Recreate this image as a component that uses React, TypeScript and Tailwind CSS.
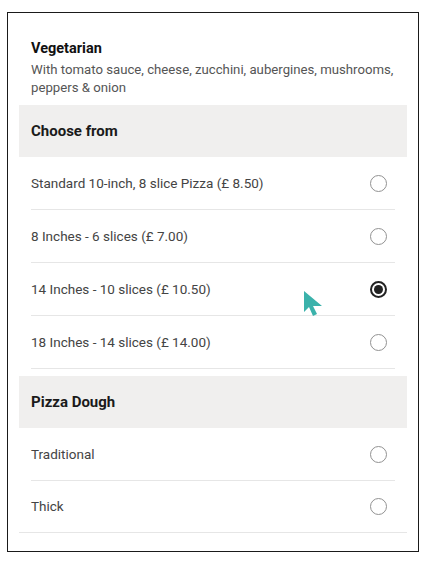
import { useState } from "react";

type Option = { label: string };

const sizes: Option[] = [
  { label: "Standard 10-inch, 8 slice Pizza (£ 8.50)" },
  { label: "8 Inches - 6 slices (£ 7.00)" },
  { label: "14 Inches - 10 slices (£ 10.50)" },
  { label: "18 Inches - 14 slices (£ 14.00)" },
];

const doughs: Option[] = [{ label: "Traditional" }, { label: "Thick" }];

function Radio({ checked }: { checked: boolean }) {
  if (checked) {
    return (
      <span className="flex h-[17px] w-[17px] shrink-0 items-center justify-center rounded-full border-[2px] border-[#222]">
        <span className="block h-[9px] w-[9px] rounded-full bg-[#222]" />
      </span>
    );
  }
  return <span className="block h-[17px] w-[17px] shrink-0 rounded-full border-[1.5px] border-[#929292]" />;
}

function Row({ label, checked, onClick, full }: { label: string; checked: boolean; onClick: () => void; full?: boolean }) {
  return (
    <div className={full ? "border-b border-[#e6e6e6] px-3" : "px-3"}>
      <button
        type="button"
        onClick={onClick}
        className={`flex w-full items-center justify-between pr-[8px] text-left ${full ? "h-[51px]" : "h-[53px] border-b border-[#e6e6e6]"}`}
      >
        <span className="text-[13.5px] text-[#444]">{label}</span>
        <Radio checked={checked} />
      </button>
    </div>
  );
}

function SectionHeader({ title }: { title: string }) {
  return (
    <div className="flex h-[52px] items-center bg-[#f0efee] px-3">
      <h3 className="text-[15px] font-bold text-[#1a1a1a]">{title}</h3>
    </div>
  );
}

export default function App() {
  const [size, setSize] = useState(2);
  const [dough, setDough] = useState<number | null>(null);

  return (
    <div className="h-[567px] w-[429px] bg-white pl-[7px] pt-[12px] font-['Roboto',sans-serif]">
      <div className="relative h-[540px] w-[412px] border border-[#1a1a1a] px-[11px] pt-[26px]">
        <div className="px-3 pb-2">
          <h2 className="text-[14.5px] font-bold leading-5 text-[#111]">Vegetarian</h2>
          <p className="mt-[2px] text-[13.2px] leading-[18px] text-[#555]">
            With tomato sauce, cheese, zucchini, aubergines, mushrooms, peppers &amp; onion
          </p>
        </div>

        <SectionHeader title="Choose from" />
        <div>
          {sizes.map((s, i) => (
            <Row key={s.label} label={s.label} checked={size === i} onClick={() => setSize(i)} />
          ))}
        </div>

        <div className="mt-[7px]">
          <SectionHeader title="Pizza Dough" />
          {doughs.map((d, i) => (
            <Row
              key={d.label}
              label={d.label}
              checked={dough === i}
              onClick={() => setDough(i)}
              full={i === doughs.length - 1}
            />
          ))}
        </div>

        {/* mouse pointer */}
        <svg className="pointer-events-none absolute left-[295px] top-[277px]" width="22" height="32" viewBox="0 0 22 32">
          <path d="M1 1 L1 22 L6 17 L10 26 L14 24 L10 16 L19 16 Z" fill="#3bb2ab" />
        </svg>
      </div>
    </div>
  );
}
